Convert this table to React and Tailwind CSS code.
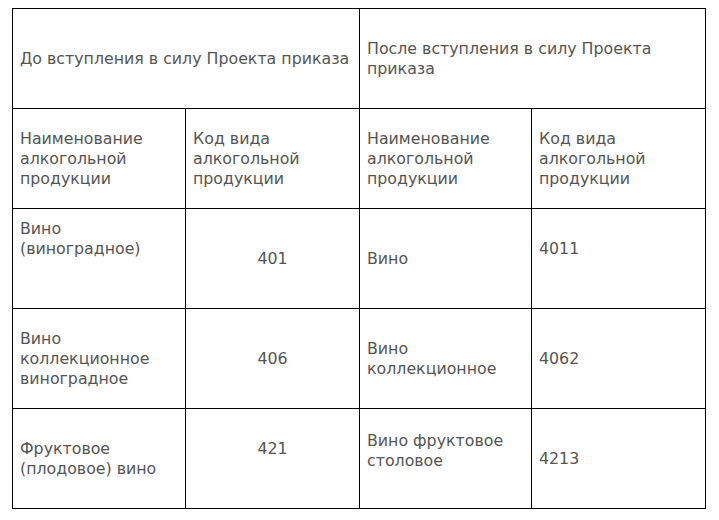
import React from "react";

const cell = "border border-black align-middle px-[7px] py-0 font-normal";

export default function App() {
  return (
    <div className="bg-white w-[719px] h-[520px] pt-2 pl-3 text-[15.8px] leading-[20px] text-[#555]" style={{ fontFamily: '"DejaVu Sans", Verdana, sans-serif' }}>
      <table className="border-collapse table-fixed w-[693px] text-left">
        <colgroup>
          <col className="w-[173px]" />
          <col className="w-[174px]" />
          <col className="w-[172px]" />
          <col className="w-[174px]" />
        </colgroup>
        <tbody>
          <tr className="h-[100px]">
            <td colSpan={2} className={cell}>До вступления в силу Проекта приказа</td>
            <td colSpan={2} className={cell}>После вступления в силу Проекта приказа</td>
          </tr>
          <tr className="h-[100px]">
            <td className={cell}>Наименование алкогольной продукции</td>
            <td className={cell}>Код вида алкогольной продукции</td>
            <td className={cell}>Наименование алкогольной продукции</td>
            <td className={cell}>Код вида алкогольной продукции</td>
          </tr>
          <tr className="h-[100px]">
            <td className={cell + " pb-[40px]"}>Вино (виноградное)</td>
            <td className={cell + " text-center"}>401</td>
            <td className={cell}>Вино</td>
            <td className={cell + " pb-[20px]"}>4011</td>
          </tr>
          <tr className="h-[100px]">
            <td className={cell}>Вино коллекционное виноградное</td>
            <td className={cell + " text-center"}>406</td>
            <td className={cell}>Вино коллекционное</td>
            <td className={cell}>4062</td>
          </tr>
          <tr className="h-[100px]">
            <td className={cell}>Фруктовое (плодовое) вино</td>
            <td className={cell + " text-center pb-[20px]"}>421</td>
            <td className={cell + " pb-[16px]"}>Вино фруктовое столовое</td>
            <td className={cell}>4213</td>
          </tr>
        </tbody>
      </table>
    </div>
  );
}
